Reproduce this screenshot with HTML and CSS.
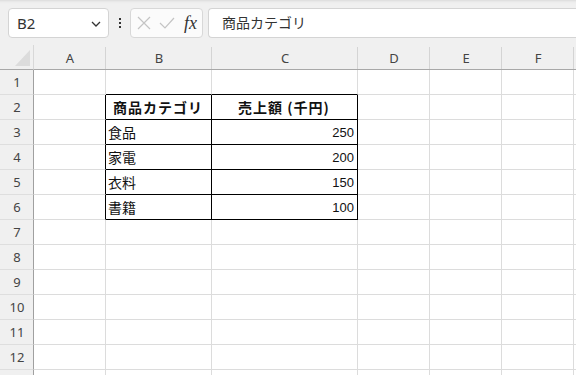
FILE: index.html
```html
<!DOCTYPE html>
<html>
<head>
    <title>Sheet</title>
    <link rel="stylesheet" href="styles.css">
</head>
<body>
    <div class="toolbar">
        <div class="namebox">
            <span>B2</span>
            <svg class="chev" width="10" height="6" viewBox="0 0 10 6"><path d="M1 1 L5 5 L9 1" fill="none" stroke="#333" stroke-width="1.3"/></svg>
        </div>
        <div class="dots"><i></i><i></i><i></i></div>
        <div class="fxbox">
            <svg width="14" height="14" viewBox="0 0 14 14"><path d="M1 1 L13 13 M13 1 L1 13" stroke="#c4c4c4" stroke-width="1.2"/></svg>
            <svg width="16" height="12" viewBox="0 0 16 12"><path d="M1 6 L6 11 L15 1" fill="none" stroke="#c4c4c4" stroke-width="1.2"/></svg>
            <span class="fx">fx</span>
        </div>
        <div class="formula">商品カテゴリ</div>
    </div>

    <div class="sheet">
        <div class="corner"><div class="tri"></div></div>
        <div class="colhead">A</div>
        <div class="colhead">B</div>
        <div class="colhead">C</div>
        <div class="colhead">D</div>
        <div class="colhead">E</div>
        <div class="colhead">F</div>
        <div class="colhead last"></div>

        <div class="rowhead">1</div>
        <div class="cell"></div><div class="cell bb"></div><div class="cell bb"></div><div class="cell"></div><div class="cell"></div><div class="cell"></div><div class="cell"></div>

        <div class="rowhead">2</div>
        <div class="cell br"></div><div class="cell box th">商品カテゴリ</div><div class="cell box th">売上額 (千円)</div><div class="cell"></div><div class="cell"></div><div class="cell"></div><div class="cell"></div>

        <div class="rowhead">3</div>
        <div class="cell br"></div><div class="cell box">食品</div><div class="cell box num">250</div><div class="cell"></div><div class="cell"></div><div class="cell"></div><div class="cell"></div>

        <div class="rowhead">4</div>
        <div class="cell br"></div><div class="cell box">家電</div><div class="cell box num">200</div><div class="cell"></div><div class="cell"></div><div class="cell"></div><div class="cell"></div>

        <div class="rowhead">5</div>
        <div class="cell br"></div><div class="cell box">衣料</div><div class="cell box num">150</div><div class="cell"></div><div class="cell"></div><div class="cell"></div><div class="cell"></div>

        <div class="rowhead">6</div>
        <div class="cell br"></div><div class="cell box">書籍</div><div class="cell box num">100</div><div class="cell"></div><div class="cell"></div><div class="cell"></div><div class="cell"></div>

        <div class="rowhead">7</div>
        <div class="cell"></div><div class="cell"></div><div class="cell"></div><div class="cell"></div><div class="cell"></div><div class="cell"></div><div class="cell"></div>
        <div class="rowhead">8</div>
        <div class="cell"></div><div class="cell"></div><div class="cell"></div><div class="cell"></div><div class="cell"></div><div class="cell"></div><div class="cell"></div>
        <div class="rowhead">9</div>
        <div class="cell"></div><div class="cell"></div><div class="cell"></div><div class="cell"></div><div class="cell"></div><div class="cell"></div><div class="cell"></div>
        <div class="rowhead">10</div>
        <div class="cell"></div><div class="cell"></div><div class="cell"></div><div class="cell"></div><div class="cell"></div><div class="cell"></div><div class="cell"></div>
        <div class="rowhead">11</div>
        <div class="cell"></div><div class="cell"></div><div class="cell"></div><div class="cell"></div><div class="cell"></div><div class="cell"></div><div class="cell"></div>
        <div class="rowhead">12</div>
        <div class="cell"></div><div class="cell"></div><div class="cell"></div><div class="cell"></div><div class="cell"></div><div class="cell"></div><div class="cell"></div>
        <div class="rowhead"></div>
        <div class="cell"></div><div class="cell"></div><div class="cell"></div><div class="cell"></div><div class="cell"></div><div class="cell"></div><div class="cell"></div>
    </div>
</body>
</html>
```

FILE: styles.css
```css
body {
    margin: 0;
    padding: 0;
    width: 576px;
    height: 375px;
    overflow: hidden;
    background-color: #fff;
    font-family: "Noto Sans", "Noto Sans CJK JP", sans-serif;
    color: #222;
}

.toolbar {
    height: 45px;
    box-sizing: border-box;
    padding: 8px 0 0 8px;
    background: linear-gradient(#dcdcdc 0, #ececec 2px, #f0f0f0 4px);
    display: flex;
    align-items: flex-start;
}

.namebox {
    width: 101px;
    height: 30px;
    box-sizing: border-box;
    background-color: #fff;
    border: 1px solid #d4d4d4;
    border-radius: 4px;
    display: flex;
    align-items: center;
    justify-content: space-between;
    padding: 0 7px 0 8px;
    font-size: 15px;
    color: #333;
}

.chev {
    margin-top: 1px;
}

.dots {
    width: 21px;
    height: 30px;
    display: flex;
    flex-direction: column;
    align-items: center;
    justify-content: center;
    gap: 2px;
}

.dots i {
    width: 2px;
    height: 2px;
    background-color: #333;
}

.fxbox {
    width: 73px;
    height: 30px;
    box-sizing: border-box;
    background-color: #fbfbfb;
    border: 1px solid #d8d8d8;
    border-radius: 4px;
    display: flex;
    align-items: center;
    padding: 0 0 0 6px;
    gap: 8px;
}

.fx {
    font-family: "Liberation Serif", "DejaVu Serif", serif;
    font-style: italic;
    font-size: 18px;
    color: #333;
    margin-left: 1px;
}

.formula {
    flex: 1;
    margin-left: 5px;
    height: 30px;
    box-sizing: border-box;
    background-color: #fff;
    border: 1px solid #d4d4d4;
    border-right: none;
    border-radius: 4px 0 0 4px;
    padding: 0 0 0 13px;
    line-height: 27px;
    font-family: "Noto Sans CJK JP", sans-serif;
    font-size: 14px;
    color: #333;
}

.sheet {
    display: grid;
    grid-template-columns: 34px 72px 106px 146px 72px 72px 72px 1fr;
    grid-auto-rows: 25px;
}

.corner {
    background-color: #f0f0f0;
    border-right: 1px solid #d8d8d8;
    border-bottom: 1px solid #a8a8a8;
    position: relative;
}

.tri {
    position: absolute;
    right: 3px;
    bottom: 3px;
    width: 0;
    height: 0;
    border-left: 15px solid transparent;
    border-bottom: 16px solid #dcdcdc;
}

.colhead {
    background-color: #f0f0f0;
    border-bottom: 1px solid #a8a8a8;
    box-shadow: inset -1px 0 0 #d4d4d4;
    border-top: 2px solid #f0f0f0;
    display: flex;
    align-items: center;
    justify-content: center;
    font-size: 13px;
    color: #444;
}

.rowhead {
    background-color: #f0f0f0;
    border-right: 1px solid #a0a0a0;
    border-bottom: 1px solid #dedede;
    display: flex;
    align-items: center;
    justify-content: center;
    font-size: 13px;
    color: #444;
    padding-left: 1px;
}

.cell {
    border-right: 1px solid #dcdcdc;
    border-bottom: 1px solid #dcdcdc;
    display: flex;
    align-items: center;
    padding: 0 3px 0 2px;
    font-family: "Noto Sans CJK JP", sans-serif;
    font-size: 14px;
    color: #111;
    white-space: nowrap;
}

.cell.bb {
    border-bottom-color: #000;
}

.cell.br {
    border-right-color: #000;
}

.cell.box {
    border-right-color: #000;
    border-bottom-color: #000;
}

.cell.th {
    justify-content: center;
    font-weight: bold;
    letter-spacing: 1px;
}

.cell.num {
    justify-content: flex-end;
    font-family: "Liberation Sans", sans-serif;
    font-size: 13px;
}
```
